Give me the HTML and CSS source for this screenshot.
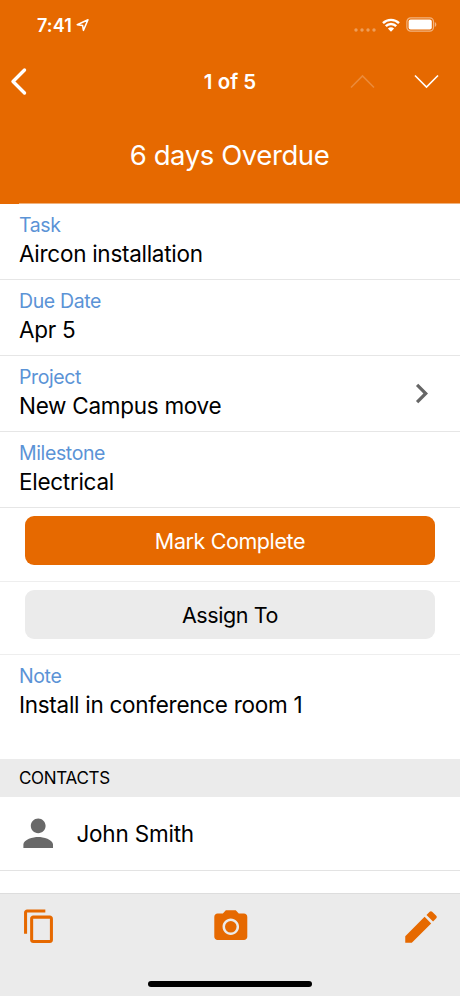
FILE: index.html
```html
<!DOCTYPE html>
<html lang="en">
<head>
<meta charset="utf-8">
<title>Task</title>
<link rel="stylesheet" href="styles.css">
</head>
<body>
<div class="screen">
  <header class="header">
    <div class="status">
      <span class="time">7:41</span>
      <svg class="location" width="14" height="14" viewBox="0 0 14 14"><path d="M1.200 6.700 12 1.700 7.400 12.400 6.600 7.400Z"/></svg>
      <div class="status-icons">
        <svg class="signal" width="22" height="6" viewBox="0 0 22 6"><circle cx="2" cy="3" r="1.700"/><circle cx="8" cy="3" r="1.700"/><circle cx="14" cy="3" r="1.700"/><circle cx="20" cy="3" r="1.700"/></svg>
        <svg class="wifi" width="18" height="14" viewBox="0 0 18 14"><path d="M1 5.200a11.300 11.300 0 0 1 16 0M3.800 8.200a7.200 7.200 0 0 1 10.400 0"/><path class="dot" d="M5.900 10.600a4.500 4.500 0 0 1 6.200 0L9 13.700Z"/></svg>
        <svg class="battery" width="31" height="15" viewBox="0 0 31 15"><rect class="case" x=".9" y=".9" width="26.600" height="13.200" rx="3.800"/><rect class="charge" x="2.600" y="2.600" width="23.200" height="9.800" rx="2"/><path class="cap" d="M28.800 5v5c1-.4 1.500-1.400 1.500-2.500S29.800 5.400 28.800 5Z"/></svg>
      </div>
    </div>
    <nav class="nav">
      <svg class="back" width="20" height="30" viewBox="0 0 20 30"><path d="M15.500 3 4 14.500 15.500 26"/></svg>
      <span class="count">1 of 5</span>
      <div class="pager">
        <svg class="prev" width="26" height="16" viewBox="0 0 26 16"><path d="M1 13.500 12.500 2 24 13.500"/></svg>
        <svg class="next" width="26" height="16" viewBox="0 0 26 16"><path d="M1 1.500 12.500 13 24 1.500"/></svg>
      </div>
    </nav>
    <h1 class="title">6 days Overdue</h1>
  </header>

  <main class="content">
    <section class="field"><div class="label">Task</div><div class="value">Aircon installation</div></section>
    <section class="field"><div class="label">Due Date</div><div class="value">Apr 5</div></section>
    <section class="field link">
      <div><div class="label">Project</div><div class="value">New Campus move</div></div>
      <svg class="chevron" width="39" height="39" viewBox="0 0 24 24"><path d="M10 6 8.590 7.410 13.170 12l-4.580 4.590L10 18l6-6z"/></svg>
    </section>
    <section class="field"><div class="label">Milestone</div><div class="value">Electrical</div></section>
    <div class="action"><button class="button primary">Mark Complete</button></div>
    <div class="action second"><button class="button">Assign To</button></div>
    <section class="field note"><div class="label">Note</div><div class="value">Install in conference room 1</div></section>
    <h2 class="group">CONTACTS</h2>
    <div class="contact">
      <svg class="person" width="44.400" height="44.400" viewBox="0 0 24 24"><path d="M12 12c2.210 0 4-1.790 4-4s-1.790-4-4-4-4 1.790-4 4 1.790 4 4 4zm0 2c-2.670 0-8 1.340-8 4v2h16v-2c0-2.660-5.330-4-8-4z"/></svg>
      <span class="value name">John Smith</span>
    </div>
  </main>

  <footer class="toolbar">
    <div class="tools">
      <svg class="copy" width="36.500" height="36.500" viewBox="0 0 24 24"><path d="M16 1H4c-1.100 0-2 .9-2 2v14h2V3h12V1zm3 4H8c-1.100 0-2 .9-2 2v14c0 1.100.9 2 2 2h11c1.100 0 2-.9 2-2V7c0-1.100-.9-2-2-2zm0 16H8V7h11v14z"/></svg>
      <svg class="camera" width="39.600" height="39.600" viewBox="0 0 24 24"><circle cx="12" cy="12" r="3.500"/><path d="M9 2 7.170 4H4c-1.100 0-2 .9-2 2v12c0 1.100.9 2 2 2h16c1.100 0 2-.9 2-2V6c0-1.100-.9-2-2-2h-3.170L15 2H9zm3 15c-2.760 0-5-2.240-5-5s2.240-5 5-5 5 2.240 5 5-2.240 5-5 5z"/></svg>
      <svg class="edit" width="42" height="42" viewBox="0 0 24 24"><path d="M3 17.250V21h3.750L17.810 9.940l-3.750-3.750L3 17.250zM20.710 7.040c.39-.39.39-1.020 0-1.410l-2.340-2.340c-.39-.39-1.020-.39-1.410 0l-1.830 1.830 3.750 3.750 1.830-1.830z"/></svg>
    </div>
    <div class="home"></div>
  </footer>
</div>
</body>
</html>
```
FILE: styles.css
```css
* { box-sizing: border-box; }
body { margin: 0; font-family: Inter, "Liberation Sans", sans-serif; color: #000; background: #fff; }
svg { display: block; flex: none; }
.screen { width: 460px; height: 996px; display: flex; flex-direction: column; overflow: hidden; background: #fff; }

.header { height: 204px; background: #e66900; color: #fff; flex: none; display: flex; flex-direction: column; }
.header::after { content: ""; height: 1px; margin: auto 0 0 19px; background: #f0b27c; }
.status { height: 50px; display: flex; align-items: center; padding: 0 23px 1px 37px; }
.time { font-size: 18px; font-weight: 600; line-height: 22px; padding-top: 2px; letter-spacing: .1px; }
.location { margin-left: 4px; fill: none; stroke: #fff; stroke-width: 1.500; stroke-linejoin: round; }
.status-icons { margin-left: auto; display: flex; align-items: center; }
.signal { fill: #fff; opacity: .35; margin: 11px 6px 0 0; }
.wifi { fill: none; stroke: #fff; stroke-width: 2.400; margin-right: 6px; }
.wifi .dot { fill: #fff; stroke: none; }
.battery .case { fill: none; stroke: #fff; stroke-opacity: .5; stroke-width: 1.200; }
.battery .charge { fill: #fff; }
.battery .cap { fill: #fff; fill-opacity: .5; }

.nav { height: 63px; display: grid; grid-template-columns: 1fr auto 1fr; align-items: center; padding: 0 20px 0 9px; }
.back { fill: none; stroke: #fff; stroke-width: 3.400; stroke-linecap: round; stroke-linejoin: round; }
.count { font-size: 20.500px; font-weight: 600; margin-left: 11px; }
.pager { display: flex; justify-content: flex-end; gap: 38px; }
.prev, .next { fill: none; stroke: #fff; stroke-width: 1.600; }
.prev { opacity: .22; }
.title { margin: 0; height: 84px; display: flex; align-items: center; justify-content: center; font-size: 27.500px; font-weight: 400; line-height: 34px; letter-spacing: -.42px; padding-right: 1px; }

.field { height: 76px; padding: 9px 19px 0; border-bottom: 1px solid #e6e6e6; }
.label { font-size: 19.500px; line-height: 25px; letter-spacing: -.38px; color: #5b93d6; }
.value { font-size: 22.500px; line-height: 32px; letter-spacing: -.28px; }
.link { display: flex; justify-content: space-between; }
.chevron { fill: #666; margin-top: 9px; }
.action { height: 74px; padding: 8.400px 25px 0; border-bottom: 1px solid #eee; }
.second { height: 73px; padding-top: 8px; }
.button { display: block; width: 100%; height: 49px; padding: 0; border: 0; border-radius: 9px; background: #ebebeb; color: #000; font-family: inherit; font-size: 21.500px; letter-spacing: -.4px; }
.primary { background: #e66900; color: #fff; }
.note { height: 104px; border: 0; }
.group { margin: 0; height: 38px; padding: 0 19px; display: flex; align-items: center; background: #ebebeb; font-size: 17px; font-weight: 400; letter-spacing: -.3px; }
.contact { height: 74px; display: flex; align-items: center; padding-left: 16px; border-bottom: 1px solid #e3e3e3; }
.person { fill: #696969; }
.name { margin-left: 16px; letter-spacing: -.2px; }

.toolbar { margin-top: auto; height: 103px; flex: none; display: flex; flex-direction: column; align-items: center; background: #ebebeb; border-top: 1px solid #ddd; }
.tools { width: 100%; height: 65px; display: grid; grid-template-columns: 1fr auto 1fr; align-items: center; padding: 0 18px 0 21px; fill: #e66900; }
.camera { margin-left: -2px; }
.edit { justify-self: end; }
.home { width: 164px; height: 6px; border-radius: 3px; background: #000; margin-top: 22px; }
```
